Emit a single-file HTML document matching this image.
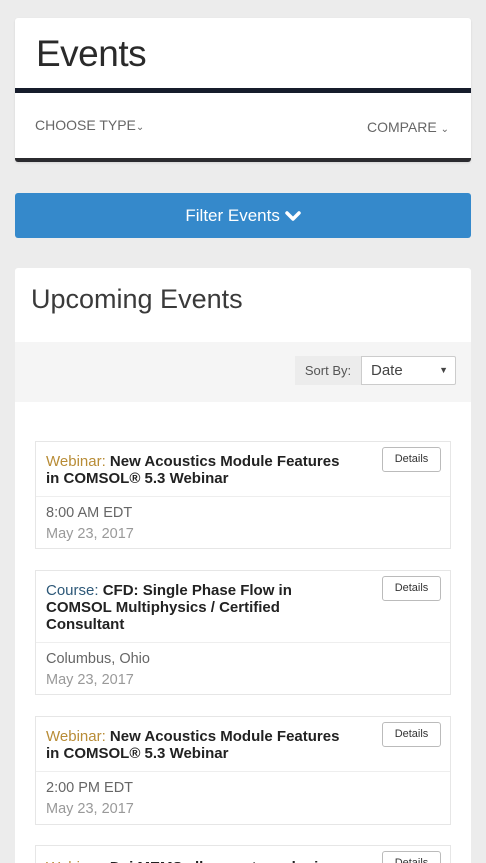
<!DOCTYPE html>
<html><head><meta charset="utf-8"><style>
*{box-sizing:border-box;margin:0;padding:0}
html,body{width:486px;height:863px;overflow:hidden}
body{background:#ececec;font-family:"Liberation Sans",sans-serif;position:relative}
.card1{position:absolute;left:15px;top:18px;width:456px;height:144px;background:#fff;border-radius:3px;border-bottom:4px solid #2b2b2f;box-shadow:0 1px 2px rgba(0,0,0,.1)}
.card1 h1{position:absolute;left:21px;top:15px;font-weight:normal;font-size:37px;color:#2a2a2a;letter-spacing:-0.5px}
.bar{position:absolute;left:0;top:70px;width:456px;height:5px;background:#161c2b}
.ct{position:absolute;top:99px;font-size:14px;color:#666}
.btn{position:absolute;left:15px;top:193px;width:456px;height:45px;background:#3589cb;border-radius:3px;color:#fff;font-size:17px;text-align:center;line-height:45px}
.card2{position:absolute;left:15px;top:268px;width:456px;height:620px;background:#fff;border-radius:3px}
.card2 h2{position:absolute;left:16px;top:16px;font-weight:normal;font-size:27px;color:#3a3a3a}
.band{position:absolute;left:0;top:74px;width:456px;height:60px;background:#f5f5f5}
.sl{position:absolute;left:280px;top:14px;width:66px;height:29px;background:#ececec;font-size:13px;color:#555;line-height:29px;text-align:center}
.sel{position:absolute;left:346px;top:14px;width:95px;height:29px;background:#fff;border:1px solid #ccc;border-radius:0 2px 2px 0;font-size:15px;color:#444;line-height:27px;padding-left:9px}
.sel span{position:absolute;right:7px;top:0;font-size:9px}
.ev{position:absolute;left:20px;width:416px;border:1px solid #e6e6e6;background:#fff}
.ev .hd{position:relative;padding:11px 96px 9px 10px;border-bottom:1px solid #eee;font-size:15px;font-weight:bold;color:#222;line-height:17px}
.ev .hd i{font-style:normal;font-weight:normal}
.w{color:#b88c36}.c{color:#2d5878}
.det{position:absolute;right:9px;top:5px;width:59px;height:25px;border:1px solid #bbb;border-radius:3px;font-size:11px;font-weight:normal;color:#333;text-align:center;line-height:23px}
.ev .bd{padding:6px 10px 5px;font-size:14.5px;color:#666;line-height:21px}
.ev .bd .d{color:#999}
</style></head><body>
<div class="card1"><h1>Events</h1><div class="bar"></div>
<div class="ct" style="left:20px">CHOOSE TYPE<span style="font-size:10px">⌄</span></div>
<div class="ct" style="right:22px;top:101px">COMPARE <span style="font-size:10px">⌄</span></div></div>
<div class="btn">Filter Events <svg width="16" height="12" viewBox="0 0 16 12" style="vertical-align:-1px"><path d="M2 3 L8 9 L14 3" fill="none" stroke="#fff" stroke-width="3.5" stroke-linecap="round" stroke-linejoin="round"/></svg></div>
<div class="card2"><h2>Upcoming Events</h2>
<div class="band"><div class="sl">Sort By:</div><div class="sel">Date<span>▼</span></div></div>
<div class="ev" style="top:173px;height:108px"><div class="hd"><i class="w">Webinar:</i> New Acoustics Module Features in COMSOL® 5.3 Webinar<div class="det">Details</div></div><div class="bd">8:00 AM EDT<br><span class="d">May 23, 2017</span></div></div>
<div class="ev" style="top:302px;height:125px"><div class="hd"><i class="c">Course:</i> CFD: Single Phase Flow in COMSOL Multiphysics / Certified Consultant<div class="det">Details</div></div><div class="bd">Columbus, Ohio<br><span class="d">May 23, 2017</span></div></div>
<div class="ev" style="top:448px;height:109px"><div class="hd"><i class="w">Webinar:</i> New Acoustics Module Features in COMSOL® 5.3 Webinar<div class="det">Details</div></div><div class="bd">2:00 PM EDT<br><span class="d">May 23, 2017</span></div></div>
<div class="ev" style="top:577px;height:60px"><div class="hd" style="padding-top:13px"><i class="w">Webinar:</i> Dai MEMS alle nanotecnologie<div class="det">Details</div></div></div>
</div>
</body></html>
